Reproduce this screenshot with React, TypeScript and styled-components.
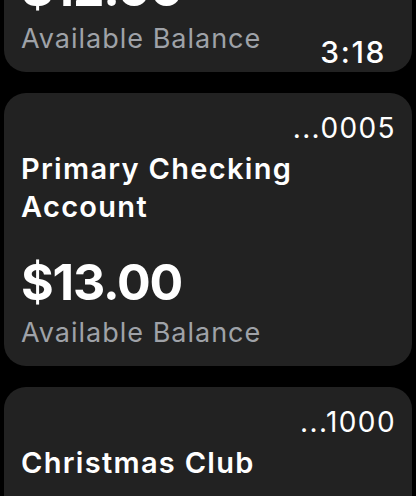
import React from 'react'
import styled, { createGlobalStyle } from 'styled-components'

interface IAccount {
  number: string
  name: string
  balance: string
}

const accounts: IAccount[] = [
  { number: '0001', name: 'Everyday Savings Account', balance: '$12.00' },
  { number: '0005', name: 'Primary Checking Account', balance: '$13.00' },
  { number: '1000', name: 'Christmas Club', balance: '$14.00' },
]

const GlobalStyle = createGlobalStyle`
  html, body {
    margin: 0;
    padding: 0;
    background: #000;
  }
  body {
    font-family: Inter, "Noto Sans", "DejaVu Sans", sans-serif;
    color: #fff;
    -webkit-font-smoothing: antialiased;
  }
`

const Screen = styled.div`
  position: relative;
  width: 416px;
  height: 496px;
  overflow: hidden;
  background: #000;
`

// scrolled list, first card mostly above the top edge
const List = styled.div`
  display: flex;
  flex-direction: column;
  gap: 21px;
  margin-top: -201px;
  padding: 0 4px;
`

const Card = styled.div`
  display: flex;
  flex-direction: column;
  background: #222222;
  border-radius: 22px;
  padding: 15px 17px 17px 17px;
`

const AccountNumber = styled.div`
  align-self: flex-end;
  margin-right: -1px;
  font-size: 28px;
  line-height: 40px;
  font-weight: 400;
  letter-spacing: 1.4px;
`

const AccountName = styled.div`
  margin-top: 2px;
  font-size: 29px;
  line-height: 38px;
  font-weight: 600;
  letter-spacing: 1.3px;
`

const Amount = styled.div`
  margin-top: 28px;
  font-size: 50px;
  line-height: 56px;
  font-weight: 700;
  letter-spacing: -1.2px;
`

const BalanceLabel = styled.div`
  margin-top: 7px;
  font-size: 27px;
  line-height: 32px;
  color: #9fa2a8;
  letter-spacing: 1px;
`

const Clock = styled.div`
  position: absolute;
  top: 34px;
  right: 30px;
  font-size: 30px;
  line-height: 36px;
  font-weight: 500;
  letter-spacing: 1.6px;
  color: #fff;
`

const AccountCard: React.FC<{ account: IAccount }> = ({ account }) => (
  <Card>
    <AccountNumber>...{account.number}</AccountNumber>
    <AccountName>{account.name}</AccountName>
    <Amount>{account.balance}</Amount>
    <BalanceLabel>Available Balance</BalanceLabel>
  </Card>
)

export default function App() {
  return (
    <>
      <GlobalStyle />
      <Screen>
        <List>
          {accounts.map(a => <AccountCard key={a.number} account={a} />)}
        </List>
        <Clock>3:18</Clock>
      </Screen>
    </>
  )
}
